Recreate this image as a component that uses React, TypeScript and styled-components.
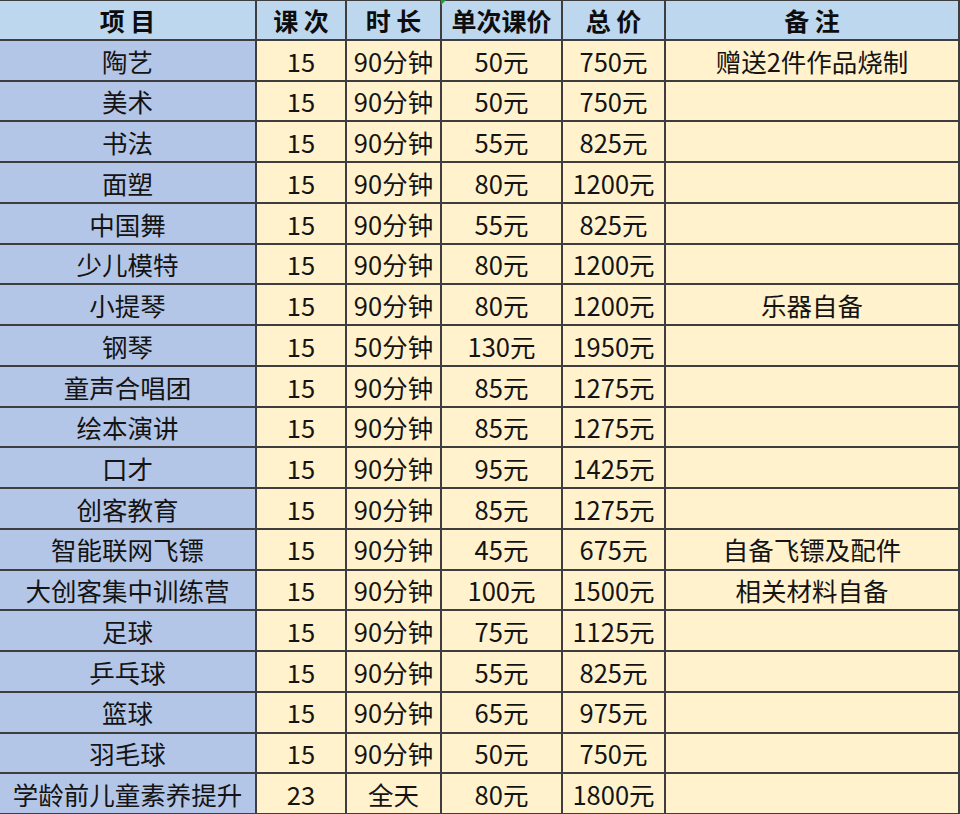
import React from "react";
import styled, { createGlobalStyle } from "styled-components";

const GlobalStyle = createGlobalStyle`
  html, body { margin: 0; padding: 0; background: #ffffff; }
  body { font-family: "Noto Sans CJK SC", "Noto Sans", sans-serif; }
`;

const Sheet = styled.div`
  width: 960px;
  height: 814px;
  box-sizing: border-box;
  display: grid;
  grid-template-columns: 255px 88px 93px 119px 101px 1fr;
  grid-template-rows: 38px repeat(19, 1fr);
  gap: 2px;
  padding: 1px 2px 1px 0;
  background: #3e3e3e;
`;

const HeadCell = styled.div<{ $marked?: boolean }>`
  position: relative;
  display: flex;
  align-items: center;
  justify-content: center;
  background: #bdd7ee;
  color: #0d0d0d;
  font-family: "Noto Sans CJK SC", sans-serif;
  font-weight: 700;
  font-size: 25px;
  line-height: 1;
  white-space: pre;
  &::before {
    content: "";
    display: ${(p) => (p.$marked ? "block" : "none")};
    position: absolute;
    left: -1px;
    top: -1px;
    width: 0;
    height: 0;
    border-top: 5px solid #1e9a3a;
    border-right: 5px solid transparent;
  }
`;

const Cell = styled.div<{ $name?: boolean }>`
  display: flex;
  align-items: center;
  justify-content: center;
  background: ${(p) => (p.$name ? "#b4c6e7" : "#fff2cc")};
  color: #141414;
  font-family: "Noto Sans CJK SC", sans-serif;
  font-size: 25.5px;
  line-height: 1;
  white-space: nowrap;
`;

type Row = [string, string, string, string, string, string];

const rows: Row[] = [
  ["陶艺", "15", "90分钟", "50元", "750元", "赠送2件作品烧制"],
  ["美术", "15", "90分钟", "50元", "750元", ""],
  ["书法", "15", "90分钟", "55元", "825元", ""],
  ["面塑", "15", "90分钟", "80元", "1200元", ""],
  ["中国舞", "15", "90分钟", "55元", "825元", ""],
  ["少儿模特", "15", "90分钟", "80元", "1200元", ""],
  ["小提琴", "15", "90分钟", "80元", "1200元", "乐器自备"],
  ["钢琴", "15", "50分钟", "130元", "1950元", ""],
  ["童声合唱团", "15", "90分钟", "85元", "1275元", ""],
  ["绘本演讲", "15", "90分钟", "85元", "1275元", ""],
  ["口才", "15", "90分钟", "95元", "1425元", ""],
  ["创客教育", "15", "90分钟", "85元", "1275元", ""],
  ["智能联网飞镖", "15", "90分钟", "45元", "675元", "自备飞镖及配件"],
  ["大创客集中训练营", "15", "90分钟", "100元", "1500元", "相关材料自备"],
  ["足球", "15", "90分钟", "75元", "1125元", ""],
  ["乒乓球", "15", "90分钟", "55元", "825元", ""],
  ["篮球", "15", "90分钟", "65元", "975元", ""],
  ["羽毛球", "15", "90分钟", "50元", "750元", ""],
  ["学龄前儿童素养提升", "23", "全天", "80元", "1800元", ""],
];

const headers = ["项 目", "课 次", "时 长", "单次课价", "总 价", "备 注"];

export default function App() {
  return (
    <>
      <GlobalStyle />
      <Sheet>
        {headers.map((h, i) => (
          <HeadCell key={h} $marked={i === 3}>
            {h}
          </HeadCell>
        ))}
        {rows.map((r, ri) =>
          r.map((v, ci) => (
            <Cell key={`${ri}-${ci}`} $name={ci === 0}>
              {v}
            </Cell>
          ))
        )}
      </Sheet>
    </>
  );
}
